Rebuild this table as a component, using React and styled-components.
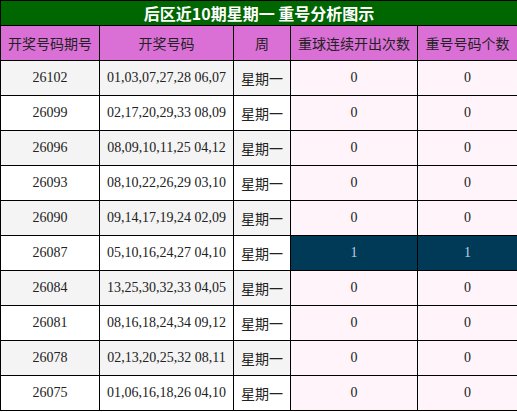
import React from "react";
import styled, { createGlobalStyle } from "styled-components";

const Global = createGlobalStyle`
  html, body { margin: 0; padding: 0; background: #fff; }
`;

const Table = styled.table`
  width: 517px;
  border-collapse: collapse;
  table-layout: fixed;
  font-family: "Liberation Serif", "Noto Sans CJK SC", serif;
  font-size: 14px;
  color: #222;
`;

const TitleCell = styled.th`
  background: #006600;
  color: #fff;
  height: 24px;
  padding: 0;
  border: 1px solid #000;
  font-family: "Noto Sans CJK SC", sans-serif;
  font-size: 16px;
  font-weight: bold;
  line-height: 24px;
`;

const HeadCell = styled.th`
  background: #da70d6;
  color: #222;
  height: 34px;
  padding: 0;
  border: 1px solid #000;
  font-family: "Noto Sans CJK SC", sans-serif;
  font-size: 14px;
  font-weight: normal;
`;

const Cell = styled.td`
  height: 34px;
  padding: 0;
  border: 1px solid #000;
  text-align: center;
  background: ${(p) => (p.$hl ? "#003a57" : p.$pink ? "#fff4fa" : p.$alt ? "#f4f4f4" : "#fff")};
  color: ${(p) => (p.$hl ? "#b8cfe0" : "#222")};
  font-family: ${(p) => (p.$cjk ? '"Noto Sans CJK SC", sans-serif' : '"Liberation Serif", serif')};
`;

const rows = [
  ["26102", "01,03,07,27,28 06,07", 0, 0],
  ["26099", "02,17,20,29,33 08,09", 0, 0],
  ["26096", "08,09,10,11,25 04,12", 0, 0],
  ["26093", "08,10,22,26,29 03,10", 0, 0],
  ["26090", "09,14,17,19,24 02,09", 0, 0],
  ["26087", "05,10,16,24,27 04,10", 1, 1],
  ["26084", "13,25,30,32,33 04,05", 0, 0],
  ["26081", "08,16,18,24,34 09,12", 0, 0],
  ["26078", "02,13,20,25,32 08,11", 0, 0],
  ["26075", "01,06,16,18,26 04,10", 0, 0],
];

export default function App() {
  return (
    <>
      <Global />
      <Table>
        <colgroup>
          <col style={{ width: 99 }} />
          <col style={{ width: 134 }} />
          <col style={{ width: 57 }} />
          <col style={{ width: 127 }} />
          <col style={{ width: 100 }} />
        </colgroup>
        <thead>
          <tr>
            <TitleCell colSpan={5}>后区近10期星期一 重号分析图示</TitleCell>
          </tr>
          <tr>
            <HeadCell>开奖号码期号</HeadCell>
            <HeadCell>开奖号码</HeadCell>
            <HeadCell>周</HeadCell>
            <HeadCell>重球连续开出次数</HeadCell>
            <HeadCell>重号号码个数</HeadCell>
          </tr>
        </thead>
        <tbody>
          {rows.map((r, i) => {
            const alt = i % 2 === 0;
            const hl = r[2] > 0;
            return (
              <tr key={r[0]}>
                <Cell $alt={alt}>{r[0]}</Cell>
                <Cell $alt={alt}>{r[1]}</Cell>
                <Cell $alt={alt} $cjk>星期一</Cell>
                <Cell $pink $hl={hl}>{r[2]}</Cell>
                <Cell $pink $hl={hl}>{r[3]}</Cell>
              </tr>
            );
          })}
        </tbody>
      </Table>
    </>
  );
}
